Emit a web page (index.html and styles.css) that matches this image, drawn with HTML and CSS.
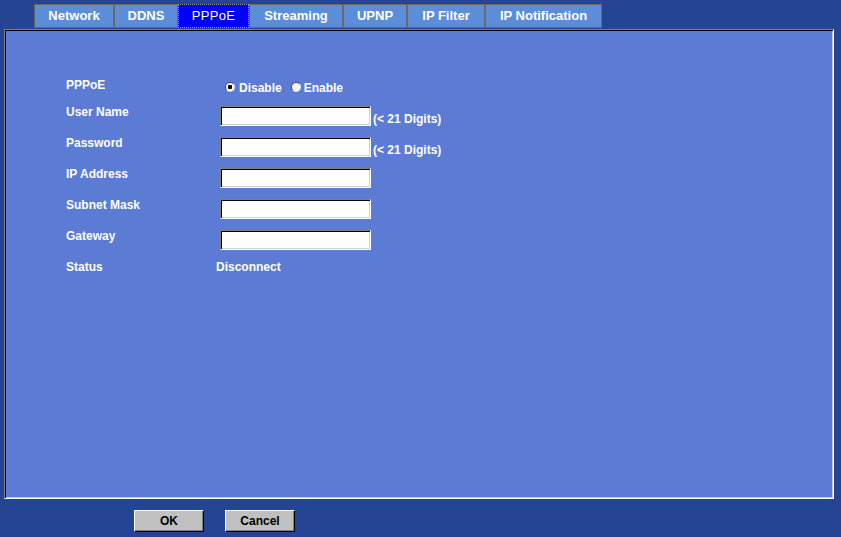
FILE: index.html
```html
<!DOCTYPE html>
<html>
<head>
<meta charset="utf-8">
<title>PPPoE</title>
<link rel="stylesheet" href="styles.css">
</head>
<body>
<div class="tabs">
  <div class="tab w-network">Network</div>
  <div class="tab w-ddns">DDNS</div>
  <div class="tab active w-pppoe">PPPoE</div>
  <div class="tab w-streaming">Streaming</div>
  <div class="tab w-upnp">UPNP</div>
  <div class="tab w-ipfilter">IP Filter</div>
  <div class="tab w-ipnotif">IP Notification</div>
</div>
<div class="panel">
  <div class="row first">
    <div class="label">PPPoE</div>
    <div class="radios">
      <input type="radio" name="pppoe" class="radio r1" checked>
      <span class="rtext">Disable</span>
      <input type="radio" name="pppoe" class="radio r2">
      <span class="rtext">Enable</span>
    </div>
  </div>
  <div class="row">
    <div class="label">User Name</div>
    <input type="text" class="field">
    <span class="hint">(&lt; 21 Digits)</span>
  </div>
  <div class="row">
    <div class="label">Password</div>
    <input type="password" class="field">
    <span class="hint">(&lt; 21 Digits)</span>
  </div>
  <div class="row">
    <div class="label">IP Address</div>
    <input type="text" class="field">
  </div>
  <div class="row">
    <div class="label">Subnet Mask</div>
    <input type="text" class="field">
  </div>
  <div class="row">
    <div class="label">Gateway</div>
    <input type="text" class="field">
  </div>
  <div class="row">
    <div class="label">Status</div>
    <div class="value">Disconnect</div>
  </div>
</div>
<div class="buttons">
  <button class="btn">OK</button>
  <button class="btn">Cancel</button>
</div>
</body>
</html>
```
FILE: styles.css
```css
html, body {
  margin: 0;
  padding: 0;
}
body {
  background: #264494;
  font-family: "Liberation Sans", Arial, sans-serif;
  width: 841px;
  height: 537px;
  overflow: hidden;
}
.tabs {
  display: flex;
  margin: 4px 0 0 34px;
  height: 24px;
}
.tab {
  box-sizing: border-box;
  height: 24px;
  border: 1px solid #686868;
  background: #5c8dd8;
  color: #fff;
  font-size: 13px;
  font-weight: bold;
  line-height: 22px;
  text-align: center;
  white-space: nowrap;
}
.tab.active {
  background: #0000ff;
  border: 1px dotted #a0a0a0;
  font-weight: normal;
  letter-spacing: 0.3px;
}
.w-network { width: 80px; }
.w-ddns { width: 64px; }
.w-pppoe { width: 71px; }
.w-streaming { width: 94px; }
.w-upnp { width: 64px; }
.w-ipfilter { width: 78px; }
.w-ipnotif { width: 117px; }

.panel {
  box-sizing: border-box;
  margin: 1px 0 0 4px;
  width: 830px;
  height: 470px;
  background: #5b7bd5;
  border: 1px solid;
  border-color: #808080 #ffffff #ffffff #808080;
  box-shadow: inset 1px 1px 0 #000000, inset -1px -1px 0 #c8c8c8;
  padding: 48px 0 0 61px;
  color: #fff;
  font-size: 12px;
  font-weight: bold;
  line-height: 14px;
}
.row {
  display: flex;
  align-items: flex-start;
  height: 31px;
}
.row.first {
  height: 27px;
}
.label {
  width: 150px;
  flex: none;
}
.radios {
  display: flex;
  align-items: flex-start;
  padding-top: 3px;
}
.radio {
  appearance: none;
  -webkit-appearance: none;
  box-sizing: border-box;
  width: 10px;
  height: 10px;
  margin: 1px 4px 0 9px;
  border-radius: 50%;
  border: 1px solid;
  border-color: #505050 #e8e8e8 #e8e8e8 #505050;
  background: #f4f4f4;
}
.radio.r2 {
  margin-right: 3px;
}
.radio:checked {
  background: radial-gradient(circle, #000 0, #000 2px, #f4f4f4 2.5px);
}
.field {
  box-sizing: border-box;
  width: 151px;
  height: 20px;
  margin: 1px 0 0 4px;
  padding: 0;
  background: #fff;
  border: 1px solid;
  border-color: #808080 #ffffff #ffffff #808080;
  box-shadow: inset 1px 1px 0 #000000, inset -1px -1px 0 #d0d0d0;
  outline: none;
}
.hint {
  margin: 7px 0 0 2px;
}
.buttons {
  display: flex;
  gap: 21px;
  margin: 11px 0 0 134px;
}
.btn {
  box-sizing: border-box;
  width: 70px;
  height: 22px;
  padding: 0;
  background: #c0c0c0;
  border: 1px solid;
  border-color: #ffffff #000000 #000000 #ffffff;
  box-shadow: inset -1px -1px 0 #808080;
  color: #000;
  font-family: "Liberation Sans", Arial, sans-serif;
  font-size: 12px;
  font-weight: bold;
}
```
